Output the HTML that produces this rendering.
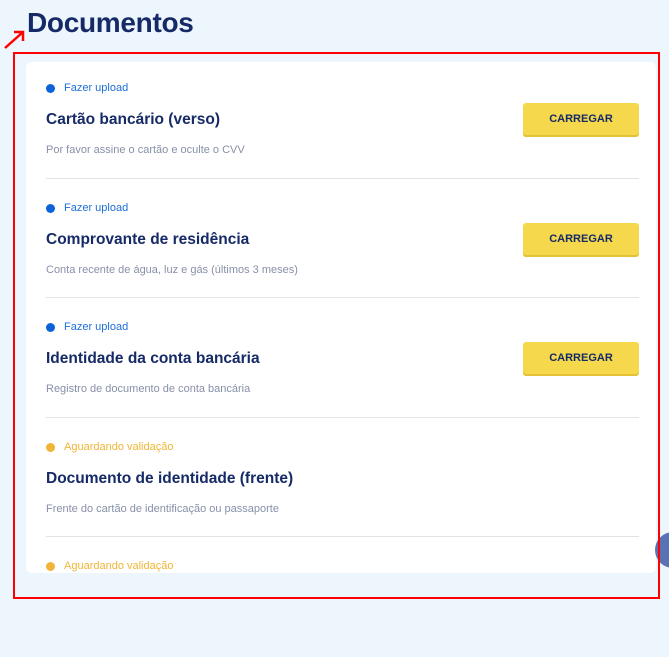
<!DOCTYPE html>
<html><head><meta charset="utf-8"><style>
*{margin:0;padding:0;box-sizing:border-box}
body{width:669px;height:609px;overflow:hidden;background:#eef6fd;font-family:"Liberation Sans",sans-serif;position:relative}
h1{position:absolute;left:27px;top:7px;font-size:28px;font-weight:bold;color:#152a66;letter-spacing:-0.3px}
.card{position:absolute;left:26px;top:62px;width:630px;height:511px;background:#fff;border-radius:6px}
.red{position:absolute;left:13px;top:52px;width:647px;height:547px;border:2px solid #f00}
.row{position:absolute;left:20px;width:593px;height:119.5px;border-bottom:1px solid #e2e2e8}
.st{position:absolute;top:23px;left:0;font-size:11px;color:#1f6fd6;padding-left:18px}
.st:before{content:"";position:absolute;left:0;top:2px;width:9px;height:9px;border-radius:50%;background:#0a63d8}
.st.y{color:#f0b536}.st.y:before{background:#f0b536}
.t{position:absolute;top:52px;left:0;font-size:15.5px;font-weight:bold;color:#152a66}
.d{position:absolute;top:85px;left:0;font-size:11px;color:#8790a8}
.b{position:absolute;right:0;top:44px;width:116px;height:32px;background:#f5d84b;border-radius:3px;font-size:11px;font-weight:bold;color:#152a66;text-align:center;line-height:32px;box-shadow:0 2px 0 #e3c235}
.circ{position:absolute;left:655px;top:532px;width:36px;height:36px;border-radius:50%;background:#5872b3}
</style></head><body>
<h1>Documentos</h1>
<svg style="position:absolute;left:3px;top:28px" width="24" height="22"><path d="M2 20 L20 4 M11 4 H20 V13" stroke="#f00" stroke-width="2.5" fill="none"/></svg>
<div class="card">
<div class="row" style="top:-3px"><div class="st">Fazer upload</div><div class="t">Cartão bancário (verso)</div><div class="d">Por favor assine o cartão e oculte o CVV</div><div class="b">CARREGAR</div></div>
<div class="row" style="top:116.5px"><div class="st">Fazer upload</div><div class="t">Comprovante de residência</div><div class="d">Conta recente de água, luz e gás (últimos 3 meses)</div><div class="b">CARREGAR</div></div>
<div class="row" style="top:236px"><div class="st">Fazer upload</div><div class="t">Identidade da conta bancária</div><div class="d">Registro de documento de conta bancária</div><div class="b">CARREGAR</div></div>
<div class="row" style="top:355.5px"><div class="st y">Aguardando validação</div><div class="t">Documento de identidade (frente)</div><div class="d">Frente do cartão de identificação ou passaporte</div></div>
<div class="row" style="top:475px;border:none"><div class="st y">Aguardando validação</div></div>
</div>
<div class="circ"></div>
<div class="red"></div>
</body></html>
